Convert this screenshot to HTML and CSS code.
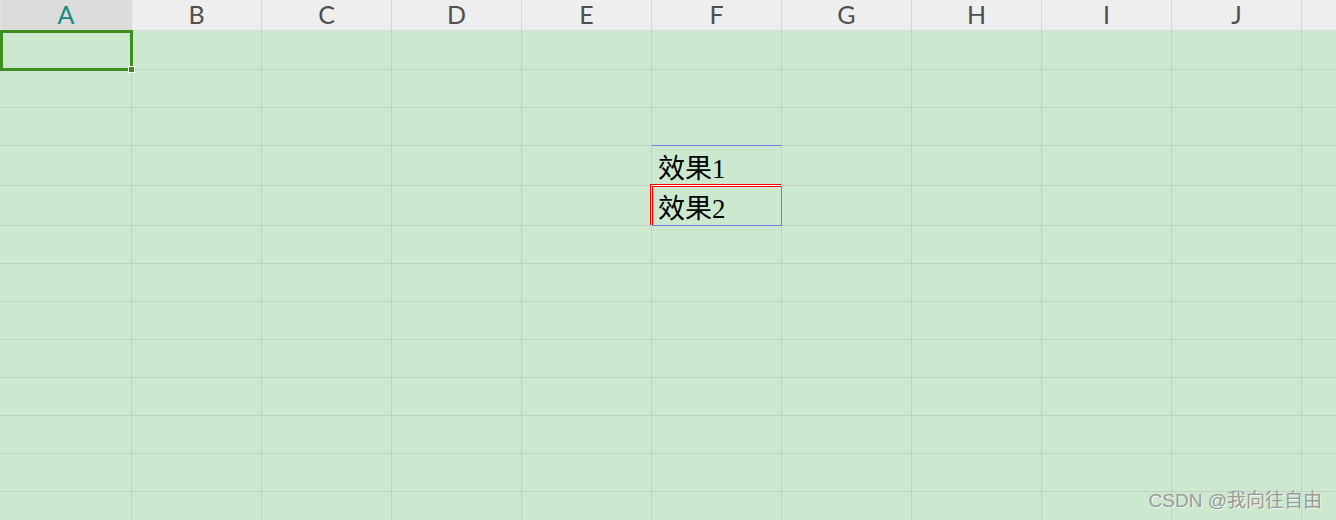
FILE: index.html
```html
<!DOCTYPE html>
<html lang="zh-CN">
<head>
    <meta charset="UTF-8">
    <meta name="viewport" content="width=device-width, initial-scale=1.0">
    <title>工作表</title>
    <link rel="stylesheet" href="styles.css">
</head>
<body>
    <div class="sheet">
        <!-- cabeçalho das colunas -->
        <div class="hd active">A</div>
        <div class="hd">B</div>
        <div class="hd">C</div>
        <div class="hd">D</div>
        <div class="hd">E</div>
        <div class="hd">F</div>
        <div class="hd">G</div>
        <div class="hd">H</div>
        <div class="hd">I</div>
        <div class="hd">J</div>
        <div class="hd last"></div>

        <!-- linha 1 -->
        <div class="cell sel-cell">
            <div class="selection"><span class="handle"></span></div>
        </div>
        <div class="cell"></div><div class="cell"></div><div class="cell"></div><div class="cell"></div>
        <div class="cell"></div><div class="cell"></div><div class="cell"></div><div class="cell"></div>
        <div class="cell"></div><div class="cell last"></div>

        <!-- linha 2 -->
        <div class="cell"></div><div class="cell"></div><div class="cell"></div><div class="cell"></div>
        <div class="cell"></div><div class="cell"></div><div class="cell"></div><div class="cell"></div>
        <div class="cell"></div><div class="cell"></div><div class="cell last"></div>

        <!-- linha 3 -->
        <div class="cell"></div><div class="cell"></div><div class="cell"></div><div class="cell"></div>
        <div class="cell"></div><div class="cell mark-bottom"></div><div class="cell"></div><div class="cell"></div>
        <div class="cell"></div><div class="cell"></div><div class="cell last"></div>

        <!-- linha 4 -->
        <div class="cell"></div><div class="cell"></div><div class="cell"></div><div class="cell"></div>
        <div class="cell"></div><div class="cell text">效果1</div><div class="cell"></div><div class="cell"></div>
        <div class="cell"></div><div class="cell"></div><div class="cell last"></div>

        <!-- linha 5 -->
        <div class="cell"></div><div class="cell"></div><div class="cell"></div><div class="cell"></div>
        <div class="cell"></div>
        <div class="cell text boxed">效果2<span class="copy-mark"></span></div>
        <div class="cell"></div><div class="cell"></div>
        <div class="cell"></div><div class="cell"></div><div class="cell last"></div>

        <!-- linhas 6 a 13 -->
        <div class="cell"></div><div class="cell"></div><div class="cell"></div><div class="cell"></div>
        <div class="cell"></div><div class="cell"></div><div class="cell"></div><div class="cell"></div>
        <div class="cell"></div><div class="cell"></div><div class="cell last"></div>

        <div class="cell"></div><div class="cell"></div><div class="cell"></div><div class="cell"></div>
        <div class="cell"></div><div class="cell"></div><div class="cell"></div><div class="cell"></div>
        <div class="cell"></div><div class="cell"></div><div class="cell last"></div>

        <div class="cell"></div><div class="cell"></div><div class="cell"></div><div class="cell"></div>
        <div class="cell"></div><div class="cell"></div><div class="cell"></div><div class="cell"></div>
        <div class="cell"></div><div class="cell"></div><div class="cell last"></div>

        <div class="cell"></div><div class="cell"></div><div class="cell"></div><div class="cell"></div>
        <div class="cell"></div><div class="cell"></div><div class="cell"></div><div class="cell"></div>
        <div class="cell"></div><div class="cell"></div><div class="cell last"></div>

        <div class="cell"></div><div class="cell"></div><div class="cell"></div><div class="cell"></div>
        <div class="cell"></div><div class="cell"></div><div class="cell"></div><div class="cell"></div>
        <div class="cell"></div><div class="cell"></div><div class="cell last"></div>

        <div class="cell"></div><div class="cell"></div><div class="cell"></div><div class="cell"></div>
        <div class="cell"></div><div class="cell"></div><div class="cell"></div><div class="cell"></div>
        <div class="cell"></div><div class="cell"></div><div class="cell last"></div>

        <div class="cell"></div><div class="cell"></div><div class="cell"></div><div class="cell"></div>
        <div class="cell"></div><div class="cell"></div><div class="cell"></div><div class="cell"></div>
        <div class="cell"></div><div class="cell"></div><div class="cell last"></div>

        <div class="cell"></div><div class="cell"></div><div class="cell"></div><div class="cell"></div>
        <div class="cell"></div><div class="cell"></div><div class="cell"></div><div class="cell"></div>
        <div class="cell"></div><div class="cell"></div><div class="cell last"></div>
    </div>

    <div class="watermark">CSDN @我向往自由</div>
</body>
</html>
```

FILE: styles.css
```css
body {
    margin: 0;
    height: 520px;
    overflow: hidden;
    background-color: #cce8cf;
    font-family: "Liberation Serif", "Noto Sans CJK SC", serif;
}

.sheet {
    display: grid;
    grid-template-columns: 132px repeat(9, 130px) 34px;
    grid-template-rows: 31px 39px 38px 38px 40px 40px repeat(8, 38px);
    width: 1336px;
    background-color: #cce8cf;
}

/* cabeçalho */
.hd {
    box-sizing: border-box;
    background-color: #eeeeee;
    border-right: 1px solid #d6d6d6;
    border-bottom: 1px solid #d9d9d9;
    color: #4f4f4f;
    font-family: Lato, "Liberation Sans", sans-serif;
    font-size: 25px;
    line-height: 28px;
    text-align: center;
}

.hd.active {
    background-color: #dcdcdc;
    color: #118a7c;
    border-left: 1px solid #e4e4e4;
}

.hd.last {
    border-right: none;
}

/* células */
.cell {
    box-sizing: border-box;
    position: relative;
    border-right: 1px solid #c3cec4;
    border-bottom: 1px solid #c3cec4;
}

.cell.last {
    border-right: none;
}

.sel-cell {
    border-left: 1px solid #c8d2c9;
    z-index: 2;
}

.selection {
    position: absolute;
    left: -1px;
    top: -1px;
    width: 133px;
    height: 41px;
    box-sizing: border-box;
    border: 3px solid #3d8e20;
}

.handle {
    position: absolute;
    right: -5px;
    bottom: -5px;
    width: 7px;
    height: 7px;
    box-sizing: border-box;
    background-color: #3d8e20;
    border: 1px solid #ffffff;
}

.mark-bottom {
    border-bottom-color: #7b7be8;
}

.text {
    padding-left: 6px;
    font-size: 27px;
    line-height: 46px;
    color: #000;
    white-space: nowrap;
}

.boxed {
    border-right-color: #7b7be8;
    border-bottom-color: #7b7be8;
}

/* borda dupla vermelha de cópia */
.copy-mark {
    position: absolute;
    left: -2px;
    top: -2px;
    width: 131px;
    height: 41px;
    box-sizing: border-box;
    border-top: 1px solid #ff0000;
    border-left: 1px solid #ff0000;
    box-shadow: inset 1px 1px 0 #ffffff, inset 2px 2px 0 #ff0000;
    pointer-events: none;
}

.watermark {
    position: absolute;
    right: 14px;
    bottom: 8px;
    font-family: "Liberation Sans", "Noto Sans CJK SC", sans-serif;
    font-size: 19px;
    color: #9a9a9a;
    text-shadow: 1px 1px 0 rgba(255, 255, 255, 0.7);
}
```
